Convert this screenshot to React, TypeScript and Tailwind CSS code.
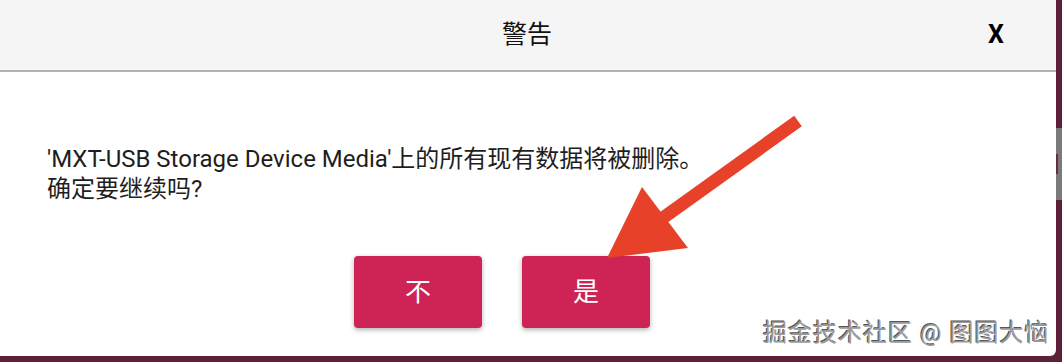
export default function App() {
  return (
    <div className="relative flex h-[362px] w-[1062px] overflow-hidden bg-[#5c2138] font-['Roboto','Noto_Sans_CJK_SC',sans-serif]">
      <div className="flex h-[356px] w-[1056px] flex-col rounded-br-[6px] bg-white">
        <header className="flex h-[72px] items-center border-b-2 border-[#b2b2b2] bg-[#f5f5f5]">
          <div className="flex-1 pl-[106px] text-center text-[25px] text-[#111]">警告</div>
          <button className="w-[108px] pr-[12px] text-center text-[25px] font-bold text-black">X</button>
        </header>
        <div className="px-[47px] pt-[72px] text-[24px] leading-[30px] text-[#1e1e1e]">
          <p>'MXT-USB Storage Device Media'上的所有现有数据将被删除。</p>
          <p>确定要继续吗?</p>
        </div>
        <div className="mt-[52px] flex gap-[40px] pl-[354px]">
          <button className="flex h-[72px] w-[128px] items-center justify-center rounded-[4px] bg-[#cd2355] text-[26px] text-white shadow-[0_2px_5px_rgba(0,0,0,0.3)]">不</button>
          <button className="flex h-[72px] w-[128px] items-center justify-center rounded-[4px] bg-[#cd2355] text-[26px] text-white shadow-[0_2px_5px_rgba(0,0,0,0.3)]">是</button>
        </div>
      </div>
      <div className="flex w-[6px] flex-col pt-[128px]">
        <div className="flex h-[72px] items-center bg-[#7a7a7a]">
          <div className="h-[20px] w-[2px] bg-[#6b2a40]" />
        </div>
      </div>

      <svg className="absolute left-0 top-0" width="1062" height="362" viewBox="0 0 1062 362">
        <line x1="798" y1="121" x2="660" y2="220" stroke="#e8412a" strokeWidth="13" />
        <polygon points="607,258 642,187 688,248" fill="#e8412a" />
      </svg>

      <div className="absolute left-[763px] top-[315px] text-[24px] tracking-[1px] text-[#9a9a9a] [text-shadow:1px_1px_0_#fff,-1px_-1px_0_#555]">
        掘金技术社区 @ 图图大恼
      </div>
    </div>
  );
}
